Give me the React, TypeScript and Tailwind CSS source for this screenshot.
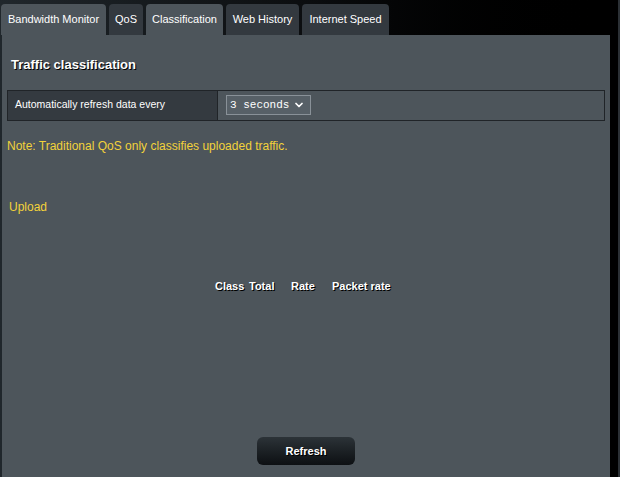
import { ChevronDown } from "lucide-react";

const tabs = [
  { label: "Bandwidth Monitor", w: "w-[105px]", light: true },
  { label: "QoS", w: "w-[34px]", light: false },
  { label: "Classification", w: "w-[77px]", light: true },
  { label: "Web History", w: "w-[73px]", light: false },
  { label: "Internet Speed", w: "w-[87px]", light: false },
];

const App = () => {
  return (
    <div className="flex h-[477px] w-[620px] overflow-hidden bg-gradient-to-r from-[#20272c] via-[#0b0d0f] to-black font-['Liberation_Sans',Arial,sans-serif] text-white">
      <div className="flex w-[610px] flex-col">
        {/* tabs */}
        <div className="flex h-[35px] items-end gap-[3px] pl-[1px]">
          {tabs.map((t) => (
            <div
              key={t.label}
              className={`flex h-[31px] ${t.w} items-center justify-center rounded-t-[4px] text-[11px] ${
                t.light ? "bg-[#4d555b]" : "bg-[#33393f]"
              }`}
            >
              {t.label}
            </div>
          ))}
        </div>

        {/* panel */}
        <div className="ml-[2px] flex flex-1 flex-col bg-[#4d555b] px-[5px]">
          <h2 className="mt-[20px] ml-[4px] text-[13px] font-bold [text-shadow:1px_1px_0_#000]">
            Traffic classification
          </h2>

          <div className="mt-[15px] flex h-[31px] border border-[#202428]">
            <div className="flex w-[209px] items-center bg-[#343a40] pl-[7px] text-[10.5px]">
              Automatically refresh data every
            </div>
            <div className="flex flex-1 items-center border-l border-[#202428] pl-[8px]">
              <div className="flex h-[20px] w-[85px] items-center justify-between border border-[#899198] bg-[#576067] pl-[3px] pr-[5px]">
                <span className="font-['Liberation_Mono',monospace] text-[11px]">3 seconds</span>
                <ChevronDown size={12} strokeWidth={3.5} />
              </div>
            </div>
          </div>

          <p className="mt-[16px] text-[12px] text-[#f2d23a]">
            Note: Traditional QoS only classifies uploaded traffic.
          </p>

          <p className="mt-[43px] ml-[2px] text-[12px] text-[#f2d23a]">Upload</p>

          <div className="mt-[62px] flex pl-[208px] text-[11px] font-bold [text-shadow:1px_1px_0_#000]">
            <span className="w-[34px]">Class</span>
            <span className="w-[42px]">Total</span>
            <span className="w-[41px]">Rate</span>
            <span>Packet rate</span>
          </div>

          <div className="mt-auto mb-[12px] flex justify-center">
            <button className="h-[28px] w-[98px] rounded-[6px] bg-gradient-to-b from-[#2c3338] to-[#0d1013] text-[11px] font-bold [text-shadow:1px_1px_0_#000]">
              Refresh
            </button>
          </div>
        </div>
      </div>
      <div className="ml-[8px] w-[2px] bg-[#2b3035]" />
    </div>
  );
};

export default App;
